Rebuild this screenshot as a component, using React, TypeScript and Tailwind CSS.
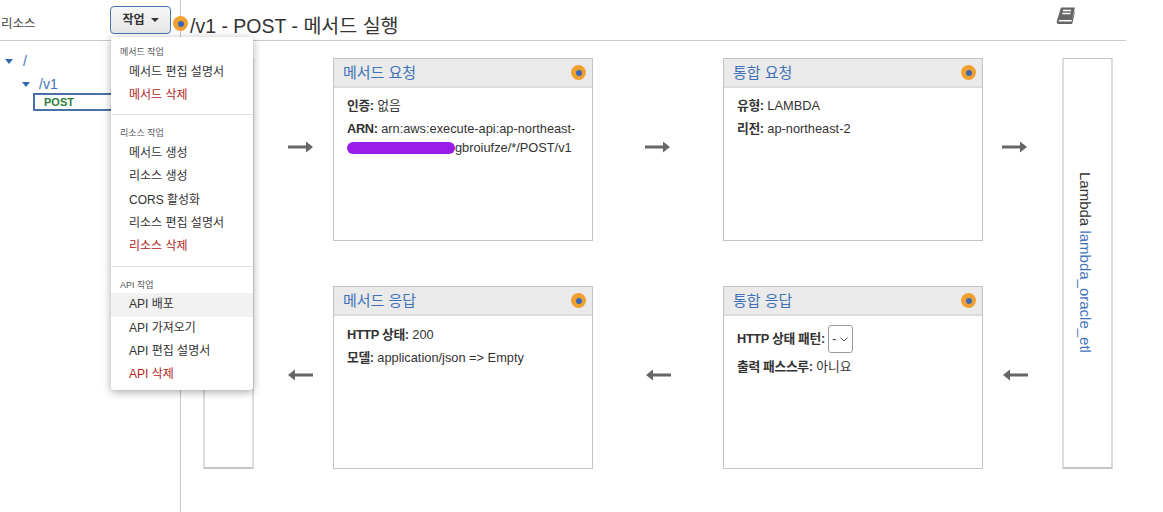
import React from 'react'

const font = "font-['Liberation_Sans','Noto_Sans_CJK_KR',sans-serif]"

function Dot() {
  return (
    <span className="flex h-[15px] w-[15px] shrink-0 items-center justify-center rounded-full bg-[#f0a030]">
      <span className="h-[6px] w-[6px] rounded-full bg-[#3b68b5]" />
    </span>
  )
}

function Arrow({ left }: { left?: boolean }) {
  return (
    <svg width="25" height="12" viewBox="0 0 25 12" className="text-[#666666]">
      {left ? (
        <path d="M0 6 L7 0.5 V4.5 H25 V7.5 H7 V11.5 Z" fill="currentColor" />
      ) : (
        <path d="M25 6 L18 0.5 V4.5 H0 V7.5 H18 V11.5 Z" fill="currentColor" />
      )}
    </svg>
  )
}

function Label({ children }: { children: React.ReactNode }) {
  return <b className="tracking-[-0.35px]">{children}</b>
}

function Card({ title, children }: { title: string; children: React.ReactNode }) {
  return (
    <div className="flex flex-col border border-[#c4c4c4] bg-white">
      <div className="flex h-[29px] shrink-0 items-center justify-between border-b-2 border-[#dcdcdc] bg-[#eaeaea] pl-[9px] pr-[6px]">
        <span className="mt-[1px] text-[15px] text-[#3f72b8]">{title}</span>
        <Dot />
      </div>
      <div className="whitespace-nowrap px-[13px] pt-[9px] text-[12.8px] leading-[20px] text-[#333333]">{children}</div>
    </div>
  )
}

function MenuSection({ label, items, hot }: { label: string; items: string[]; hot?: string }) {
  return (
    <div>
      <div className="pl-[9px] text-[9px] leading-[12px] text-[#555555]">{label}</div>
      <div className="mt-[2.5px]">
        {items.map((item, i) => (
          <div
            key={item}
            className={`h-[23.4px] pl-[18px] text-[12px] leading-[23px] ${i === items.length - 1 ? 'text-[#b3261e]' : 'text-[#333333]'} ${item === hot ? 'bg-[#f2f2f2]' : ''}`}
          >
            {item}
          </div>
        ))}
      </div>
    </div>
  )
}

export default function App() {
  return (
    <div className={`${font} relative flex h-[512px] w-[1163px] overflow-hidden bg-white`}>
      {/* resource tree */}
      <div className="w-[181px] shrink-0 border-r border-[#c8c8c8]">
        <div className="flex h-[41px] items-center justify-between border-b border-[#c8c8c8] pl-[1px] pr-[9px]">
          <span className="mt-[9px] text-[12.5px] text-[#444444]">리소스</span>
          <button className="flex h-[28px] w-[61px] items-center justify-center gap-[6px] rounded-[4px] border border-[#4a74b0] bg-gradient-to-b from-[#f7f7f7] to-[#e6e6e6] text-[12px] font-bold text-[#333333]">
            작업
            <span className="h-0 w-0 border-x-[4px] border-t-[4px] border-x-transparent border-t-[#333333]" />
          </button>
        </div>
        <div className="pt-[11px] text-[14px] text-[#3f72b8]">
          <div className="flex h-[18px] items-center pl-[5px]">
            <span className="h-0 w-0 border-x-[4.5px] border-t-[5px] border-x-transparent border-t-[#3368b5]" />
            <span className="ml-[10px]">/</span>
          </div>
          <div className="mt-[5px] flex h-[18px] items-center pl-[22px]">
            <span className="h-0 w-0 border-x-[4.5px] border-t-[5px] border-x-transparent border-t-[#3368b5]" />
            <span className="ml-[9px]">/v1</span>
          </div>
          <div className="ml-[33px] flex h-[18px] items-center border-2 border-[#4a70a8] pl-[9px] text-[11px] font-bold text-[#2e7d3a]">
            POST
          </div>
        </div>
      </div>

      {/* method execution */}
      <div className="min-w-0 flex-1">
        <div className="flex h-[41px] w-[945px] items-end border-b border-[#c8c8c8]">
          <div className="mb-[9px] ml-[-8px] h-[15px]">
            <Dot />
          </div>
          <span className="ml-[2px] text-[19.5px] leading-[28px] text-[#333333]">/v1 - POST - 메서드 실행</span>
          <svg width="20" height="18" viewBox="0 0 20 18" className="mb-[15px] ml-auto mr-[50px] text-[#666666]">
            <path d="M5 0.5 H19 L16 13 H4 Q2.8 13 2.6 14.4 H15.5 L18.8 4 V6 L16.2 17 H2.5 Q0.3 17 0.8 14 Z" fill="currentColor" />
            <path d="M7 3.5 H15 M6.4 6.5 H14.4" stroke="#ffffff" strokeWidth="1.3" />
          </svg>
        </div>
        <div className="ml-[22px] mt-[17px] grid grid-cols-[51px_79px_260px_130px_260px_79px_51px] grid-rows-[183px_45px_183px]">
          <div className="row-span-3 border-2 border-t border-[#dcdcdc] border-y-[#c4c4c4]" />
          <div className="flex items-center pb-[6px] pl-[34px]">
            <Arrow />
          </div>
          <Card title="메서드 요청">
            <div className="-mt-[1px]">
              <Label>인증:</Label> 없음
            </div>
            <div className="mt-[3px]">
              <Label>ARN:</Label> arn:aws:execute-api:ap-northeast-
            </div>
            <div className="flex leading-[18px]">
              <span className="mt-[3px] h-[12px] w-[108px] shrink-0 rounded-full bg-[#9a1ce8]" />
              <span>gbroiufze/*/POST/v1</span>
            </div>
          </Card>
          <div className="flex items-center pb-[6px] pl-[52px]">
            <Arrow />
          </div>
          <Card title="통합 요청">
            <div className="-mt-[1px]">
              <Label>유형:</Label> LAMBDA
            </div>
            <div className="mt-[3px]">
              <Label>리전:</Label> ap-northeast-2
            </div>
          </Card>
          <div className="flex items-center pb-[6px] pl-[19px]">
            <Arrow />
          </div>
          <div className="row-span-3 flex justify-center border-2 border-t border-[#dcdcdc] border-y-[#c4c4c4] pr-[6px] pt-[113px]">
            <div className="text-[15px] leading-[20px] text-[#333333] [writing-mode:vertical-rl]">
              Lambda <span className="text-[#3f72b8]">lambda_oracle_etl</span>
            </div>
          </div>
          <div className="col-span-5" />
          <div className="flex items-center pb-[6px] pl-[34px]">
            <Arrow left />
          </div>
          <Card title="메서드 응답">
            <div>
              <Label>HTTP 상태:</Label> 200
            </div>
            <div className="mt-[3px]">
              <Label>모델:</Label> application/json =&gt; Empty
            </div>
          </Card>
          <div className="flex items-center pb-[6px] pl-[53px]">
            <Arrow left />
          </div>
          <Card title="통합 응답">
            <div className="flex items-center">
              <Label>HTTP 상태 패턴:</Label>
              <span className="ml-[3px] flex h-[28px] w-[25px] items-center justify-center gap-[4px] rounded-[3px] border border-[#999999] text-[12px]">
                -
                <svg width="8" height="5" viewBox="0 0 8 5" fill="none" stroke="#555555">
                  <path d="M0.5 0.5 L4 4 L7.5 0.5" />
                </svg>
              </span>
            </div>
            <div className="mt-[4px]">
              <Label>출력 패스스루:</Label> 아니요
            </div>
          </Card>
          <div className="flex items-center pb-[6px] pl-[20px]">
            <Arrow left />
          </div>
        </div>
      </div>

      {/* actions dropdown, open over the page */}
      <div className="absolute left-[111px] top-[37px] h-[353px] w-[142px] rounded-[3px] bg-white pt-[9px] shadow-[0_2px_8px_rgba(0,0,0,0.35)]">
        <MenuSection label="메서드 작업" items={['메서드 편집 설명서', '메서드 삭제']} />
        <div className="mb-[12px] mt-[7px] border-t border-[#e2e2e2]" />
        <MenuSection label="리소스 작업" items={['메서드 생성', '리소스 생성', 'CORS 활성화', '리소스 편집 설명서', '리소스 삭제']} />
        <div className="mb-[12px] mt-[7px] border-t border-[#e2e2e2]" />
        <MenuSection label="API 작업" hot="API 배포" items={['API 배포', 'API 가져오기', 'API 편집 설명서', 'API 삭제']} />
      </div>
    </div>
  )
}
